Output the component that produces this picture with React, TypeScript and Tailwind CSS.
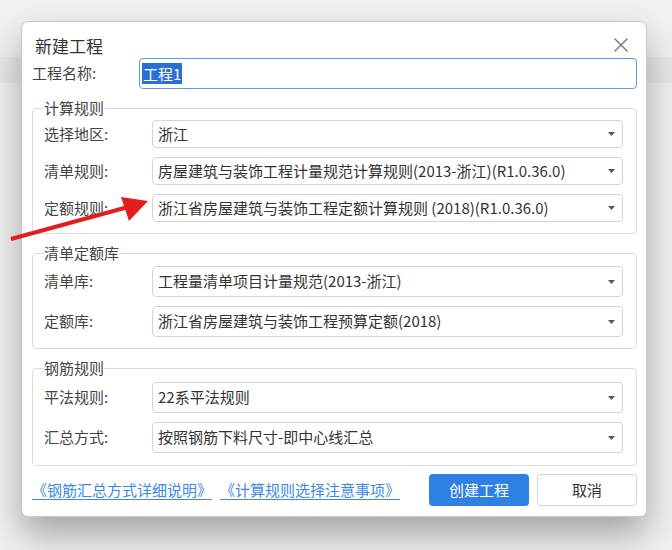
import React from 'react'

const font = { fontFamily: '"Noto Sans CJK SC", "Noto Sans", sans-serif' }

function Select({ value, tall = false }: { value: string; tall?: boolean }) {
  return (
    <div
      className={`flex-1 flex items-center justify-between rounded-[4px] border border-[#d4d4d4] bg-white pl-[5px] pr-[7px] ${
        tall ? 'h-[31px]' : 'h-[28px]'
      }`}
    >
      <span className="text-[15px] text-[#333] whitespace-nowrap">{value}</span>
      <svg width="7" height="4" viewBox="0 0 7 4">
        <path d="M0 0 L7 0 L3.5 4 Z" fill="#555" />
      </svg>
    </div>
  )
}

function Row({ label, value, tall }: { label: string; value: string; tall?: boolean }) {
  return (
    <div className="flex items-center">
      <div className="w-[108px] text-[15px] text-[#444]">{label}</div>
      <Select value={value} tall={tall} />
    </div>
  )
}

function Group({
  title,
  children,
  className = '',
}: {
  title: string
  children: React.ReactNode
  className?: string
}) {
  return (
    <fieldset className={`rounded-[4px] border border-[#dcdcdc] pl-[11px] pr-[13px] pt-0 ${className}`}>
      <legend className="px-0 text-[15px] leading-[22px] text-[#444]">{title}</legend>
      {children}
    </fieldset>
  )
}

export default function App() {
  return (
    <div className="relative h-[550px] w-[672px] overflow-hidden bg-[#f1f1f1]" style={font}>
      {/* page behind the modal */}
      <div className="h-[57px]" />
      <div className="h-[26px] bg-[#e8e8ea]" />

      {/* dialog */}
      <div className="absolute left-[21px] top-[21px] h-[496px] w-[626px] rounded-[7px] border border-[#c9c9c9] bg-white pl-[10px] pr-[9px] shadow-[0_18px_36px_rgba(0,0,0,0.32)]">
        <div className="flex h-[36px] items-start justify-between pt-[13px]">
          <span className="ml-[3px] text-[17px] leading-[22px] text-[#333]">新建工程</span>
          <svg width="16" height="16" viewBox="0 0 16 16" className="mr-[8px] mt-[2px]">
            <path d="M1.5 1.5 L14.5 14.5 M14.5 1.5 L1.5 14.5" stroke="#777" strokeWidth="1.4" />
          </svg>
        </div>

        <div className="flex items-center">
          <div className="w-[107px] text-[15px] text-[#444]">工程名称:</div>
          <div className="flex h-[31px] flex-1 items-center rounded-[4px] border border-[#5b9ae6] pl-[2px]">
            <span className="bg-[#2a6fd4] px-[1px] text-[15px] leading-[21px] text-white">工程1</span>
          </div>
        </div>

        <Group title="计算规则" className="mt-[8px] pb-[11px]">
          <div className="mt-px flex flex-col gap-[9px]">
            <Row label="选择地区:" value="浙江" />
            <Row label="清单规则:" value="房屋建筑与装饰工程计量规范计算规则(2013-浙江)(R1.0.36.0)" />
            <Row label="定额规则:" value="浙江省房屋建筑与装饰工程定额计算规则 (2018)(R1.0.36.0)" />
          </div>
        </Group>

        <Group title="清单定额库" className="mt-[8px] pb-[11px]">
          <div className="mt-[2px] flex flex-col gap-[9px]">
            <Row label="清单库:" value="工程量清单项目计量规范(2013-浙江)" tall />
            <Row label="定额库:" value="浙江省房屋建筑与装饰工程预算定额(2018)" tall />
          </div>
        </Group>

        <Group title="钢筋规则" className="mt-[8px] pb-[12px]">
          <div className="mt-[3px] flex flex-col gap-[9px]">
            <Row label="平法规则:" value="22系平法规则" tall />
            <Row label="汇总方式:" value="按照钢筋下料尺寸-即中心线汇总" tall />
          </div>
        </Group>

        <div className="mt-[8px] flex items-center">
          <a className="text-[15px] text-[#3b87e6] underline underline-offset-[3px]">《钢筋汇总方式详细说明》</a>
          <a className="ml-[8px] text-[15px] text-[#3b87e6] underline underline-offset-[3px]">《计算规则选择注意事项》</a>
          <div className="ml-auto flex gap-[8px]">
            <button className="h-[32px] w-[100px] rounded-[4px] bg-[#2f80e3] text-[15px] text-white">创建工程</button>
            <button className="h-[32px] w-[100px] rounded-[4px] border border-[#d4d4d4] bg-white text-[15px] text-[#333]">取消</button>
          </div>
        </div>
      </div>

      {/* red annotation arrow */}
      <svg className="absolute left-0 top-0" width="672" height="550" viewBox="0 0 672 550">
        <line x1="11" y1="239" x2="128" y2="207" stroke="#e11d1d" strokeWidth="4" />
        <path d="M121 197 L148 201 L129 221 Z" fill="#e11d1d" />
      </svg>
    </div>
  )
}
